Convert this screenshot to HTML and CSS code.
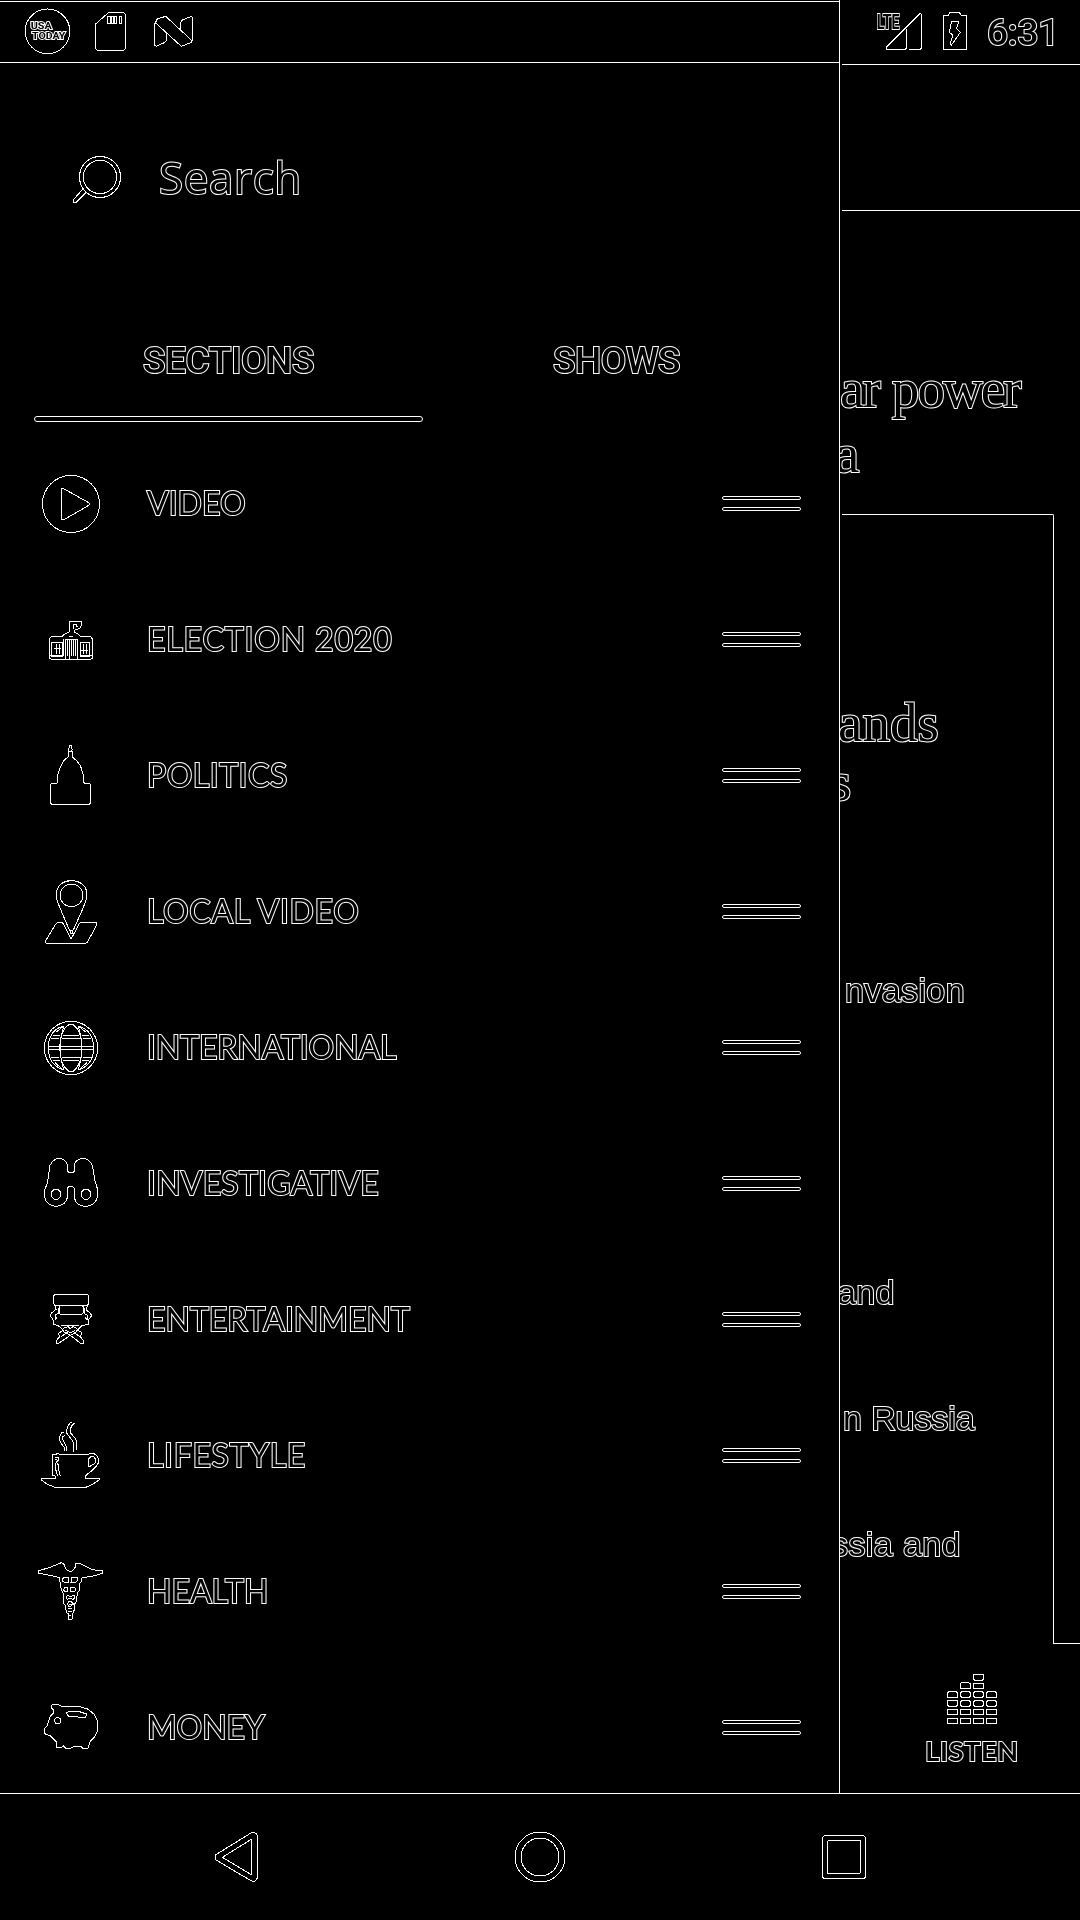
FILE: index.html
```html
<!DOCTYPE html>
<html lang="en">
<head>
<meta charset="utf-8">
<title>News menu</title>
<link rel="stylesheet" href="styles.css">
</head>
<body>
<div class="screen">
  <aside class="drawer">
    <div class="status status-left">
      <svg class="badge" viewBox="66 18 150 150"><circle cx="142.500" cy="94" r="67"/><text x="92" y="88" font-size="26" textLength="63" lengthAdjust="spacingAndGlyphs">USA</text><text x="96" y="118" font-size="27" textLength="100" lengthAdjust="spacingAndGlyphs">TODAY</text></svg>
      <svg class="sdcard" viewBox="279 30 105 129"><path d="M325 38H370L377 44V145L371 151H292L286 145V73ZM322 52L325 49H331V70H322ZM334 49H340V70H334ZM344 49H350V70H344ZM357 49H364V70H357Z"/></svg>
      <svg class="nlogo" viewBox="456 42 129 105"><path d="M466 68L472 57L497 49L575 121V127L544 139L466 68L463 74V136L469 139L495 127L499 122V98M542 90V68L547 60L574 49L578 53V117L575 127"/></svg>
    </div>
    <div class="search">
      <svg class="glass" viewBox="213 462 156 153"><circle cx="300" cy="531" r="61.500"/><circle cx="300" cy="531" r="50"/><path d="M249 567L220 599V607H228L259 576"/></svg>
      <span class="search-label">Search</span>
    </div>
    <nav class="tabs">
      <div class="tab"><span class="tab-label">SECTIONS</span><span class="underline"></span></div>
      <div class="tab"><span class="tab-label shows">SHOWS</span></div>
    </nav>
    <ul class="list">
      <li class="row"><svg class="icon" viewBox="93 432 240 240"><circle cx="213" cy="552" r="85.500"/><path d="M184.500 505.500H190L268 549V555L193 598.500H184.500Z"/></svg><span class="label w-video">VIDEO</span><span class="handle"><i></i><i></i></span></li>
      <li class="row"><svg class="icon" viewBox="93 30 240 240"><path d="M148 206V145L155 139H187L190 135L209 125V94H243L245 105L239 115L222 121V127L232 130L241 139H272L278 148V206L268 208H160ZM148 196H187M240 196H278M155 157H187V199H155ZM240 157H268V199H240ZM220 118V103H228V110H233M190 147V199M196 147V206M202 150V198M208 147V206M214 150V198M220 150V198M226 150V198M232 147V206M199 147H235M208 138H220M169 162V193M178 162V193M163 175H182M250 162V193M259 162V193M244 180H264"/></svg><span class="label w-election">ELECTION 2020</span><span class="handle"><i></i><i></i></span></li>
      <li class="row"><svg class="icon" viewBox="93 438 240 240"><path d="M208 466H214V473L217 478L214 484H208L205 478L208 473ZM206 484V500L192 511L181 531L173 555V577L169 580H154L151 584V639L156 643H267L272 639V584L268 580H254L250 574V555L242 529L232 514L217 501V484"/></svg><span class="label w-politics">POLITICS</span><span class="handle"><i></i><i></i></span></li>
      <li class="row"><svg class="icon" viewBox="93 36 240 240"><circle cx="214.500" cy="106" r="34"/><path d="M214 213L208 210L178 139L169 115V96C175 72 190 62 214 62C240 62 257 76 260 96V115L248 147L220 210Z"/><path d="M213 238L189 190L184 187H174L168 191L136 244V248L141 250H257L262 247L290 195V188L286 187H243L238 190ZM211 214V219H217V214"/></svg><span class="label w-local">LOCAL VIDEO</span><span class="handle"><i></i><i></i></span></li>
      <li class="row"><svg class="icon" viewBox="93 444 240 240"><circle cx="213" cy="564" r="80"/><path d="M190 498C157 508 145 533 145 564S159 619 190 630M236 498C267 508 281 533 281 564S267 619 236 630M207 493C170 520 170 608 207 634H219C255 608 255 520 219 493ZM192 499C177 537 177 590 192 629M234 499C249 537 249 590 234 629M145 559H281M145 568H281M189 526H236M187 535H239M187 592H239M189 601H236M158 526H179M154 535H177M247 526H268M249 535H272M154 592H177M158 601H179M249 592H272M247 601H268M169 516L190 499M257 516L236 499M164 607L190 630M262 607L236 630"/></svg><span class="label w-international">INTERNATIONAL</span><span class="handle"><i></i><i></i></span></li>
      <li class="row"><svg class="icon" viewBox="93 12 240 240"><path d="M205 97L202 90V73C196 62 188 55 178 55C166 56 156 64 150 76L142 130L133 152V170C138 189 151 199 169 199C187 197 199 187 202 173V145C207 137 218 137 223 145V174C227 189 239 199 258 199C276 198 289 187 293 168V149L285 123L277 76C270 63 260 55 248 55C237 57 227 63 223 72V93L220 97Z"/><circle cx="168" cy="163" r="15"/><circle cx="258" cy="163" r="15"/></svg><span class="label w-investigative">INVESTIGATIVE</span><span class="handle"><i></i><i></i></span></li>
      <li class="row"><svg class="icon" viewBox="93 420 240 240"><path d="M165 463H262L266 467V491L262 496H165L160 490V468ZM181 496H245L249 500V519L245 523H181L177 519V500ZM163 493L168 508L154 520L151 527L160 541V553L175 557L190 571L176 579L178 591L169 602V610H176L211 586L242 610H251V602L241 590L246 577L231 571L245 557L266 553L267 538L275 527L270 519L259 510L262 496M174 503V520L165 525V538L172 532M252 503V520L261 525V538L254 532M184 555H238M190 565L205 560L211 566L219 560L231 566M196 571L211 578L226 571M183 590L203 577M221 577L239 590M190 575L211 586L231 575"/></svg><span class="label w-entertainment">ENTERTAINMENT</span><span class="handle"><i></i><i></i></span></li>
      <li class="row"><svg class="icon" viewBox="93 48 240 240"><path d="M223 69L216 76L210 89L212 99L227 117L230 126V150M216 67H211L202 82L199 98L219 125L221 155M191 98L184 99L178 114L181 126L193 143V152M194 106L188 111L189 121L199 139V152M158 226V163H168L172 160L178 163H265L275 160C289 161 296 172 296 186C292 202 278 210 258 226L256 235H299L296 241L278 253L257 262H166L144 254L124 240V235H166L167 229ZM265 178C268 171 275 169 282 171C288 177 289 186 282 192L270 199H265ZM166 172H175V181L169 187L175 195L178 220L181 229M166 178H172M166 190V204L170 219L175 229"/></svg><span class="label w-lifestyle">LIFESTYLE</span><span class="handle"><i></i><i></i></span></li>
      <li class="row"><svg class="icon" viewBox="93 456 240 240"><path d="M115 512L145 504L184 488L192 493L198 508L206 513H216L225 503L228 490L241 491L276 509L308 513V520L277 529L246 533L243 546L238 550V571L233 577L228 605L223 614V629L218 641L216 657H206L205 642L199 637L196 616L190 609V580L184 570L178 533L150 526L115 519ZM193 532H205V547H193L188 543V537ZM216 532H232V542L227 547H213ZM195 561H202V575H195L191 570ZM211 561L225 563L228 570L222 575H211ZM202 586L211 590L222 586L224 593L219 598L211 594L202 598L199 592ZM206 605H214L220 612L213 618H206L202 612ZM207 612H215M205 626H217M205 634H217M208 645H214"/></svg><span class="label w-health">HEALTH</span><span class="handle"><i></i><i></i></span></li>
      <li class="row"><svg class="icon" viewBox="93 24 240 240"><path d="M154 76L158 73H173L187 80H240L263 87L283 103L293 124V152L284 171L270 185L264 205H249L243 199H222L210 205H198L190 197L184 202H170V186L151 167L137 163L133 157V147L142 137L150 110L161 99V91L154 84ZM199 98L208 94H235L260 102L256 112H245L205 108Z"/><circle cx="173" cy="122" r="9"/></svg><span class="label w-money">MONEY</span><span class="handle"><i></i><i></i></span></li>
    </ul>
  </aside>
  <main class="page">
    <div class="status status-right">
      <svg class="signal" viewBox="225 30 144 129"><path d="M258 142L361 40L365 44V144L360 149H327M258 142V148H315L320 145V86"/><text x="230" y="87" font-size="63" textLength="68" lengthAdjust="spacingAndGlyphs">LTE</text></svg>
      <svg class="battery" viewBox="426 33 78 120"><path d="M430 46H445L449 38H478L484 46H500V148H430ZM455 64H477L469 86L481 97L454 136L451 128L459 105L448 97Z"/></svg>
      <span class="time">6:31</span>
    </div>
    <div class="appbar"></div>
    <div class="headline"><p class="h1">ar power</p><p class="h2">a</p></div>
    <div class="story-area">
      <section class="card">
        <p class="title t1">ands</p>
        <p class="title t2">s</p>
        <p class="item i1">nvasion</p>
        <p class="item i2">and</p>
        <p class="item i3">n Russia</p>
        <p class="item i4">ssia and</p>
      </section>
      <div class="gutter"></div>
    </div>
    <div class="listen">
      <svg class="bars" viewBox="738 279 156 156"><path d="M820 283H851V298L846 301H825L820 298ZM781 325V310L790 307H804L812 311V325ZM820 310H851V325H820ZM742 388H773V403H742ZM781 388H812V403H781ZM820 388H851V403H820ZM859 388H890V403H859ZM742 415H773V430H742ZM781 415H812V430H781ZM820 415H851V430H820ZM859 415H890V430H859Z"/><path d="M747 334H768L773 339V352H742V339ZM786 334H807L812 339V347L807 352H786L781 347V339ZM825 334H846L851 339V347L846 352H825L820 347V339ZM864 334H885L890 339V352H859V339ZM742 361H773V374L768 379H747L742 374ZM786 361H807L812 366V374L807 379H786L781 374V366ZM825 361H846L851 366V374L846 379H825L820 374V366ZM864 361H885L890 366V374L885 379H864L859 374V366Z"/></svg>
      <span class="listen-label">LISTEN</span>
    </div>
  </main>
</div>
<footer class="navbar">
  <svg class="back" viewBox="639 450 144 162"><path d="M646 525L753 459L762 457L768 460L772 468V594L767 602L759 605L751 601L648 540L646 536ZM754 478V584L667 532Z"/></svg>
  <svg class="home" viewBox="0 0 54 54"><circle cx="27" cy="27" r="25"/><circle cx="27" cy="27" r="19"/></svg>
  <svg class="recent" viewBox="0 0 48 48"><rect x="2.500" y="2.500" width="43" height="43" rx="3"/><rect x="7.500" y="7.500" width="33" height="33" rx="1.500"/></svg>
</footer>
</body>
</html>
```
FILE: styles.css
```css
* { box-sizing: border-box; margin: 0; padding: 0; }
html { background: #000; }
body {
  width: 1080px;
  height: 1920px;
  overflow: hidden;
  display: flex;
  flex-direction: column;
  color: #000;
  -webkit-text-stroke: 2px #fff;
  paint-order: stroke fill;
  font-family: Lato, sans-serif;
}
svg {
  display: block;
  flex: none;
  fill: none;
  stroke: #fff;
  stroke-width: 1px;
  shape-rendering: crispEdges;
}
svg * { vector-effect: non-scaling-stroke; }
svg text {
  font-family: Roboto, sans-serif;
  font-weight: 700;
  fill: #000;
  stroke-width: 1.8px;
  -webkit-text-stroke: 0;
}
span, p { white-space: nowrap; }

.screen { height: 1793px; display: flex; will-change: transform; }
.drawer { width: 840px; border-right: 1px solid #fff; flex: none; overflow: hidden; }
.page { width: 240px; overflow: hidden; display: flex; flex-direction: column; }

.status { display: flex; align-items: flex-start; }
.status-left { margin-top: 1px; height: 62px; border-top: 1px solid #fff; border-bottom: 1px solid #fff; padding-left: 22px; }
.badge { width: 50px; height: 50px; margin-top: 4px; }
.sdcard { width: 35px; height: 43px; margin: 8px 0 0 21px; }
.nlogo { width: 43px; height: 35px; margin: 12px 0 0 24px; }

.search { height: 232px; display: flex; align-items: center; padding-left: 71px; }
.glass { width: 52px; height: 51px; }
.search-label { font: 44px/60px "Open Sans", sans-serif; letter-spacing: .6px; margin: -4px 0 0 36px; }

.tabs { height: 127px; padding-left: 34px; display: flex; }
.tab { width: 389px; padding-top: 44px; display: flex; flex-direction: column; align-items: center; }
.tab-label { font: 500 37px/44px Roboto, sans-serif; letter-spacing: -.4px; }
.shows { margin-left: -2px; }
.underline { width: 389px; height: 6px; margin-top: 33px; border: 1px solid #fff; border-radius: 3px; }

.list { list-style: none; margin-top: 14px; }
.row { height: 136px; display: flex; align-items: center; padding: 0 38px 0 31px; }
.icon { width: 80px; height: 80px; }
.label { flex: 1; margin: -2px 0 0 36px; font-size: 32px; line-height: 40px; }
.w-election { letter-spacing: .85px; }
.w-politics { letter-spacing: .5px; }
.w-local { letter-spacing: .67px; }
.w-international { letter-spacing: -.1px; }
.w-investigative { letter-spacing: .2px; }
.w-lifestyle { letter-spacing: .65px; }
.w-money { letter-spacing: -.1px; }
.handle { width: 79px; margin-top: -1px; display: flex; flex-direction: column; gap: 7px; }
.handle i { height: 4px; border: 1px solid #fff; border-radius: 2px; }

.status-right { height: 65px; margin-left: 2px; border-bottom: 1px solid #fff; padding-left: 33px; flex: none; }
.signal { width: 48px; height: 43px; margin-top: 10px; }
.battery { width: 26px; height: 40px; margin: 11px 0 0 19px; }
.time { font: 500 37px/44px Roboto, sans-serif; letter-spacing: -.2px; margin: 11px 0 0 19px; }
.appbar { height: 146px; margin-left: 2px; border-bottom: 1px solid #fff; flex: none; }

.headline { height: 303px; padding-top: 145px; font: 55px/65px "Liberation Serif", serif; flex: none; }
.h1 { letter-spacing: -1.9px; word-spacing: 1px; }
.h2 { text-indent: -5px; }
.story-area { height: 1130px; display: flex; flex: none; }
.card { width: 212px; margin-left: 2px; border: solid #fff; border-width: 1px 1px 0 0; border-top-right-radius: 2px; padding-top: 178px; }
.title { margin-left: -4px; font: 55px/59px "Liberation Serif", serif; }
.t2 { margin-left: -12px; }
.item { font: 34px/36px "Liberation Sans", sans-serif; letter-spacing: .4px; }
.i1 { margin: 161px 0 0 3px; }
.i2 { margin: 266px 0 0 -5px; }
.i3 { margin: 90px 0 0 1px; letter-spacing: -.1px; }
.i4 { margin: 90px 0 0 -11px; }
.gutter { width: 26px; border-bottom: 1px solid #fff; }

.listen { padding: 29px 0 0 24px; display: flex; flex-direction: column; align-items: center; }
.bars { width: 52px; height: 52px; }
.listen-label { font: 700 27px/34px Lato, sans-serif; letter-spacing: .7px; margin-top: 9px; }

.navbar { height: 127px; border-top: 1px solid #fff; display: flex; align-items: center; padding-left: 213px; }
.back { width: 48px; height: 54px; }
.home { width: 54px; height: 54px; margin-left: 252px; }
.recent { width: 48px; height: 48px; margin-left: 253px; }
```
